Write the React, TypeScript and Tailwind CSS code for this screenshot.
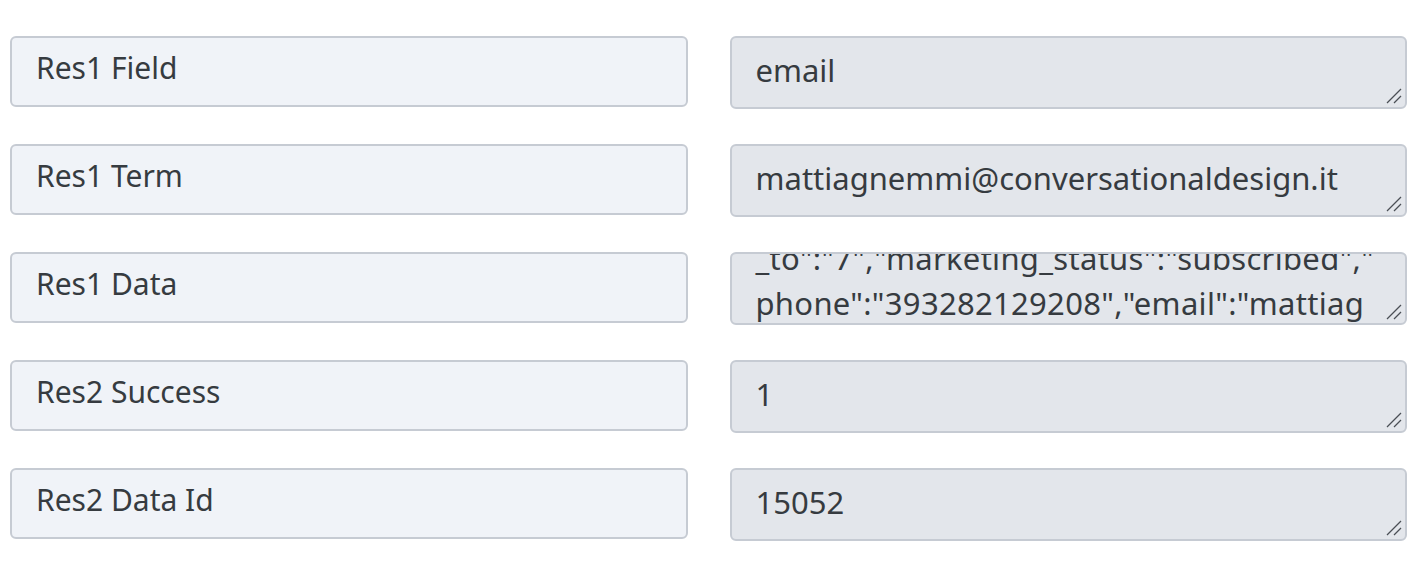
import React from "react";

const rows: { label: string; value: string[]; scrolled?: boolean }[] = [
  { label: "Res1 Field", value: ["email"] },
  { label: "Res1 Term", value: ["mattiagnemmi@conversationaldesign.it"] },
  {
    label: "Res1 Data",
    value: ['_to":"7","marketing_status":"subscribed","', 'phone":"393282129208","email":"mattiag'],
    scrolled: true,
  },
  { label: "Res2 Success", value: ["1"] },
  { label: "Res2 Data Id", value: ["15052"] },
];

function Grabber() {
  return (
    <svg
      className="absolute right-[3px] bottom-[3px] w-[16px] h-[16px] pointer-events-none"
      viewBox="0 0 16 16"
      fill="none"
      stroke="#4a4f55"
      strokeWidth={1.3}
    >
      <path d="M1 15 L15 1" />
      <path d="M8 15 L15 8" />
    </svg>
  );
}

export default function App() {
  return (
    <div
      className="min-h-screen bg-white pt-[36px] pl-[10px] pr-[13px] [font-variant-ligatures:none]"
      style={{ fontFamily: "'Noto Sans', sans-serif" }}
    >
      <div className="grid grid-cols-2 gap-x-[42px] gap-y-[35px] items-start">
        {rows.map((r) => (
          <React.Fragment key={r.label}>
            <div className="h-[71px] rounded-[6px] border-2 border-[#c6cbd3] bg-[#f0f3f8] px-[24px] pt-[6px] text-[30px] leading-[48px] text-[#363b40]">
              {r.label}
            </div>
            <div className="relative h-[73px] overflow-hidden rounded-[6px] border-2 border-[#c6cbd3] bg-[#e3e6eb] px-[24px] text-[31px] leading-[48px] text-[#363b40]">
              <div
                className={
                  r.scrolled
                    ? "-mt-[18px] leading-[45px] whitespace-nowrap tracking-[0.3px]"
                    : "pt-[8px] whitespace-nowrap"
                }
              >
                {r.value.map((line) => (
                  <div key={line}>{line}</div>
                ))}
              </div>
              <Grabber />
            </div>
          </React.Fragment>
        ))}
      </div>
    </div>
  );
}
